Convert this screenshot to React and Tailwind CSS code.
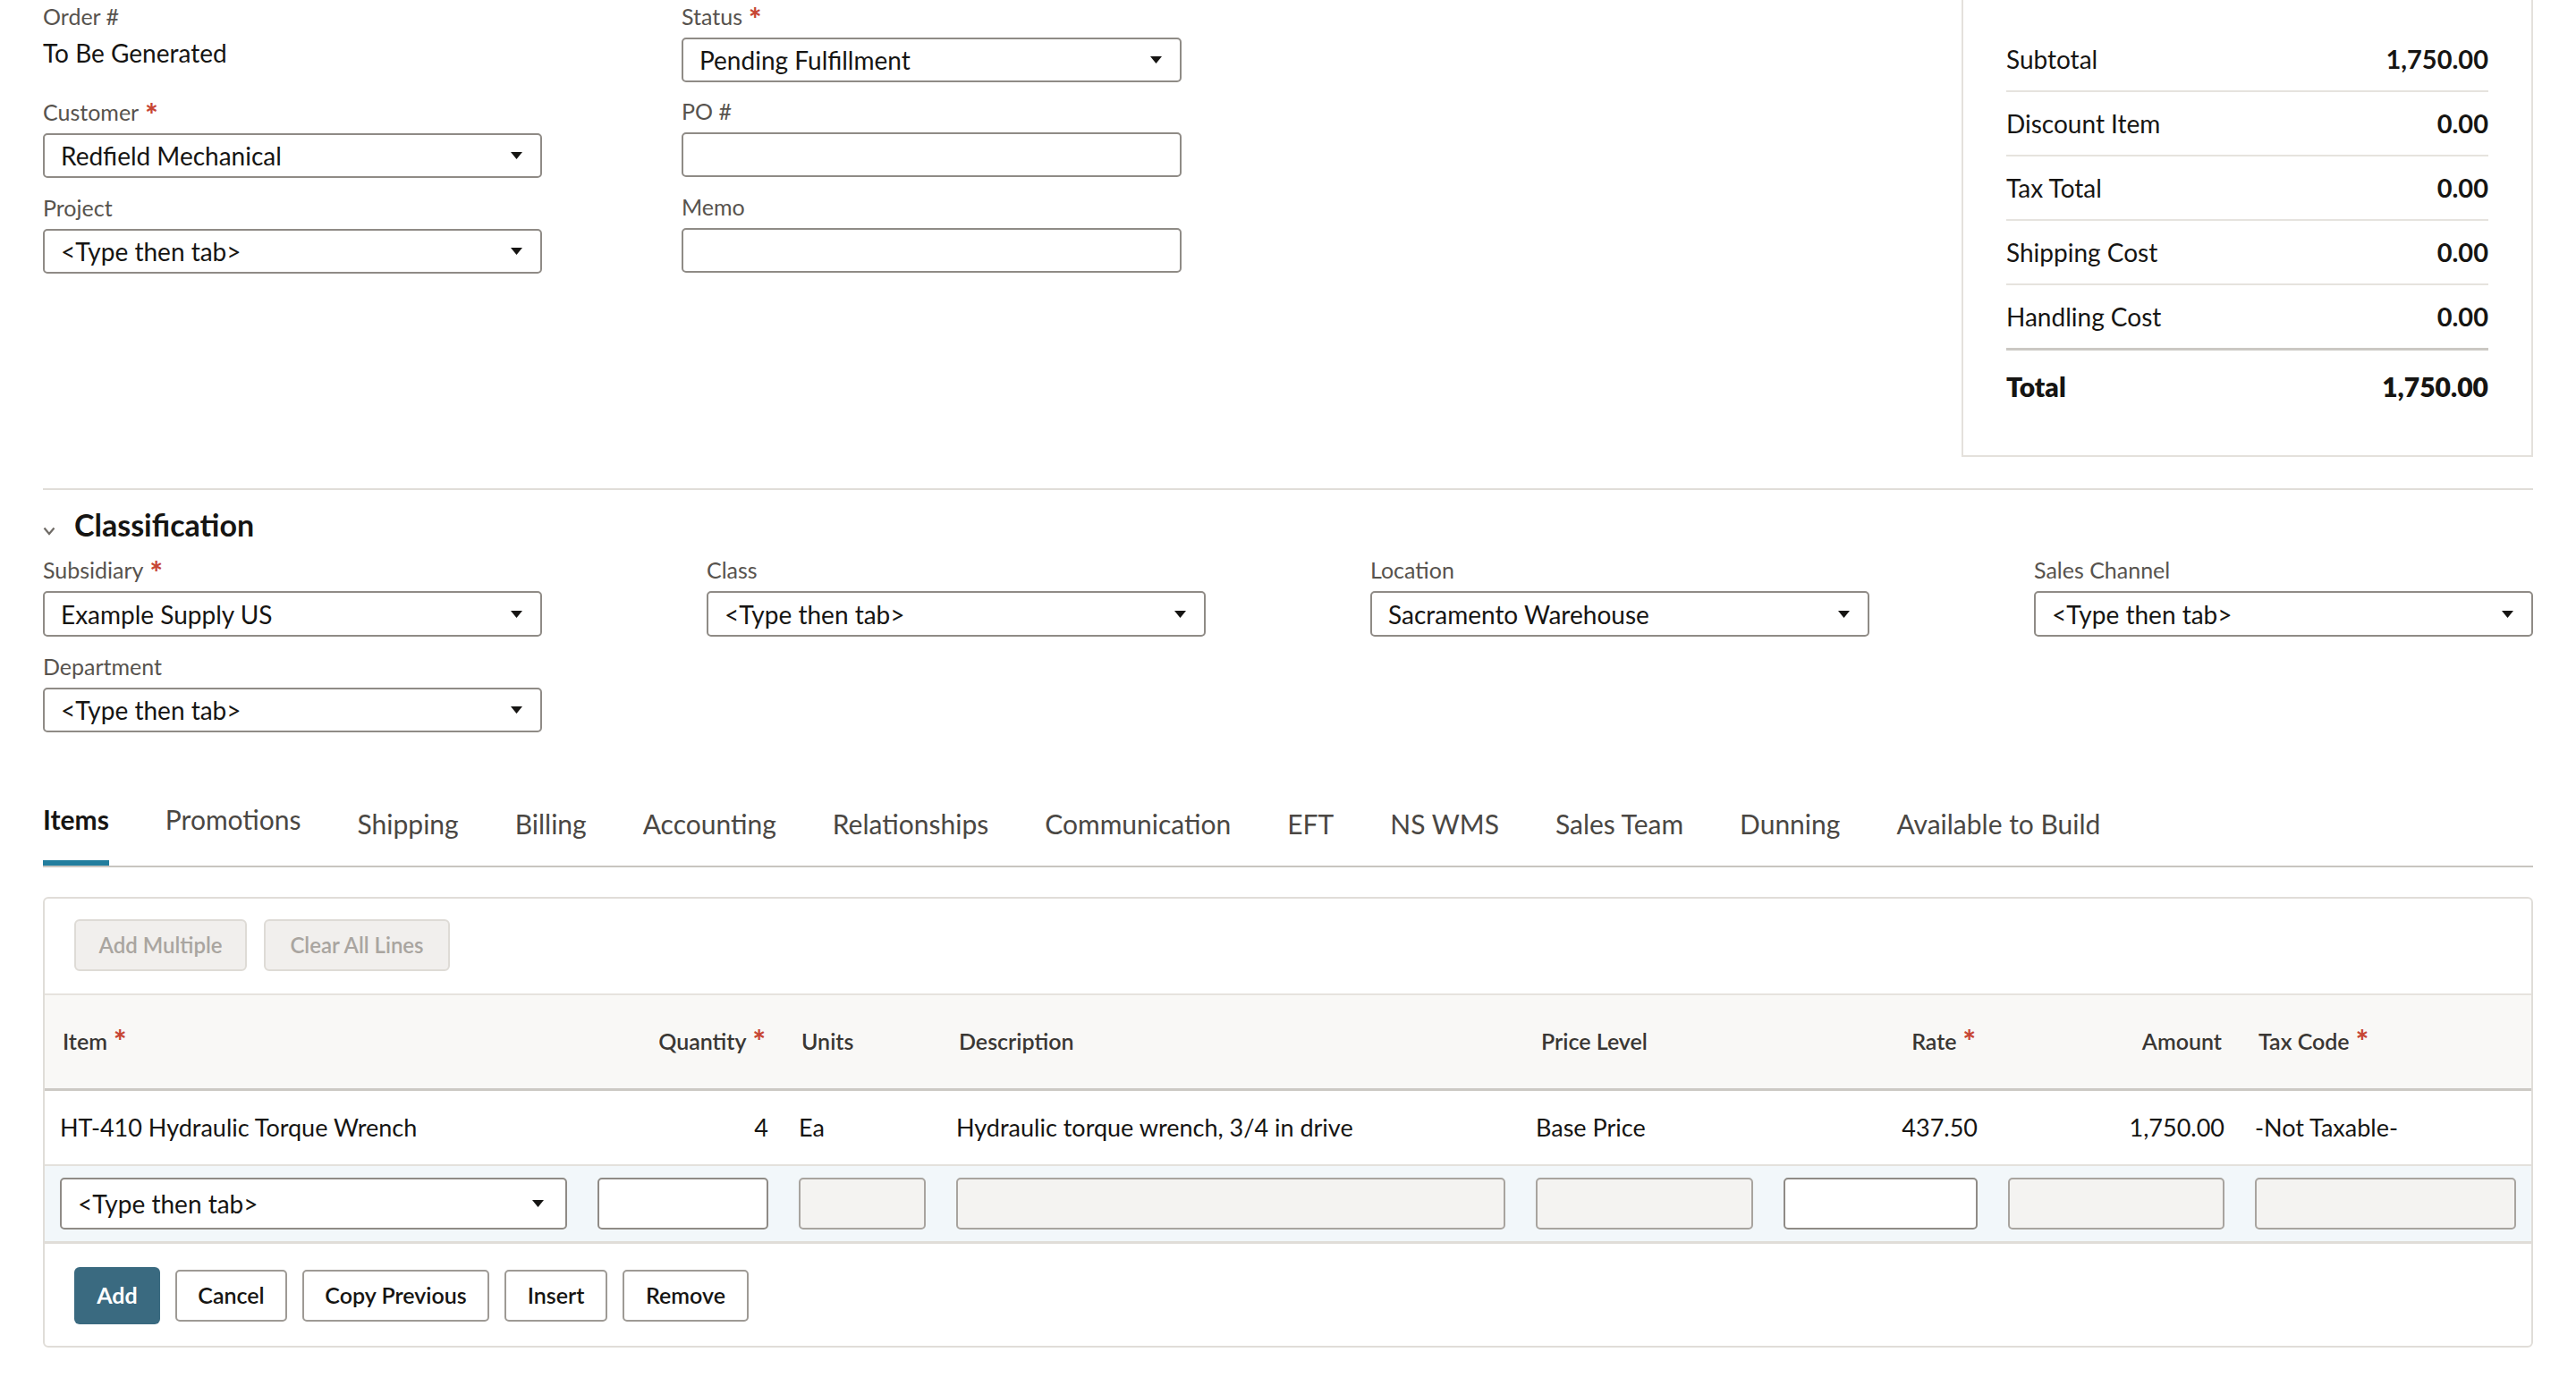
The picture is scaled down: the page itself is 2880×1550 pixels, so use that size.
const INK = "text-[#161513]";

function Caret() {
  return (
    <svg width="13" height="8" viewBox="0 0 13 8" className="shrink-0">
      <path d="M0 0h13L6.5 8z" fill="#161513" />
    </svg>
  );
}

function Req() {
  return (
    <span className="relative top-[1px] ml-[7px] align-top text-[34px] font-black leading-none text-[#c74634]">
      *
    </span>
  );
}

function Label({ children, required }) {
  return (
    <div className="h-[30px] whitespace-nowrap text-[25px] leading-[30px] text-[#57534e]">
      {children}
      {required && <Req />}
    </div>
  );
}

function Select({ value, className = "" }) {
  return (
    <div
      className={`flex items-center justify-between rounded-[5px] border-2 border-[#8f8b86] bg-white pl-[18px] pr-[20px] text-[28px] ${INK} ${className}`}
    >
      <span className="whitespace-nowrap">{value}</span>
      <Caret />
    </div>
  );
}

function Box({ className = "" }) {
  return <div className={`rounded-[5px] border-2 border-[#8f8b86] bg-white ${className}`} />;
}

function Field({ label, required, children }) {
  return (
    <div className="flex flex-col">
      <Label required={required}>{label}</Label>
      <div className="mt-[9px]">{children}</div>
    </div>
  );
}

const SUMMARY = [
  ["Subtotal", "1,750.00"],
  ["Discount Item", "0.00"],
  ["Tax Total", "0.00"],
  ["Shipping Cost", "0.00"],
  ["Handling Cost", "0.00"],
];

const TABS = [
  "Items",
  "Promotions",
  "Shipping",
  "Billing",
  "Accounting",
  "Relationships",
  "Communication",
  "EFT",
  "NS WMS",
  "Sales Team",
  "Dunning",
  "Available to Build",
];

const COLS =
  "grid grid-cols-[567px_191px_142px_614px_243px_217px_242px_292px] gap-x-[34px] px-[17px]";

export default function App() {
  return (
    <div className={`min-h-screen bg-white font-['Lato','Liberation_Sans',sans-serif] ${INK}`}>
      {/* header fields + summary */}
      <div className="flex px-[48px]">
        <div className="grid grid-cols-[558px_559px] gap-x-[156px] pt-[3px]">
          <div className="flex flex-col">
            <Label>Order #</Label>
            <div className="mt-[8px] h-[36px] text-[28px] leading-[36px]">To Be Generated</div>
            <div className="mt-[33px]">
              <Field label="Customer" required>
                <Select value="Redfield Mechanical" className="h-[50px]" />
              </Field>
            </div>
            <div className="mt-[18px]">
              <Field label="Project">
                <Select value="<Type then tab>" className="h-[50px]" />
              </Field>
            </div>
          </div>
          <div className="flex flex-col">
            <Field label="Status" required>
              <Select value="Pending Fulfillment" className="h-[50px]" />
            </Field>
            <div className="mt-[17px]">
              <Field label="PO #">
                <Box className="h-[50px]" />
              </Field>
            </div>
            <div className="mt-[18px]">
              <Field label="Memo">
                <Box className="h-[50px]" />
              </Field>
            </div>
          </div>
        </div>

        <div className="ml-auto w-[639px] border-x-2 border-b-2 border-[#e4e1dc] px-[48px] pt-[31px] pb-[37px] text-[28px]">
          {SUMMARY.map(([k, v], i) => (
            <div
              key={k}
              className={`flex items-center justify-between ${
                i === 4
                  ? "h-[73px] border-b-[3px] border-[#cbc8c3]"
                  : "h-[72px] border-b-2 border-[#e6e3de]"
              }`}
            >
              <span>{k}</span>
              <span className="text-[29px] font-bold">{v}</span>
            </div>
          ))}
          <div className="flex h-[80px] items-center justify-between text-[30px] font-extrabold">
            <span>Total</span>
            <span>1,750.00</span>
          </div>
        </div>
      </div>

      <div className="mx-[48px] mt-[35px] h-[2px] bg-[#e0ddd8]" />

      {/* classification */}
      <div className="mx-[48px] mt-[18px] flex h-[40px] items-center">
        <svg width="14" height="10" viewBox="0 0 14 10" className="mt-[16px] shrink-0">
          <path d="M1.5 1.5 7 8l5.5-6.5" fill="none" stroke="#6f6b66" strokeWidth="2.2" />
        </svg>
        <h2 className="ml-[21px] text-[34px] font-bold">Classification</h2>
      </div>

      <div className="mt-[16px] grid grid-cols-4 gap-x-[184px] gap-y-[18px] px-[48px]">
        <Field label="Subsidiary" required>
          <Select value="Example Supply US" className="h-[51px]" />
        </Field>
        <Field label="Class">
          <Select value="<Type then tab>" className="h-[51px]" />
        </Field>
        <Field label="Location">
          <Select value="Sacramento Warehouse" className="h-[51px]" />
        </Field>
        <Field label="Sales Channel">
          <Select value="<Type then tab>" className="h-[51px]" />
        </Field>
        <Field label="Department">
          <Select value="<Type then tab>" className="h-[50px]" />
        </Field>
      </div>

      {/* tabs */}
      <div className="mx-[48px] mt-[77px] flex gap-[63px] border-b-2 border-[#c8c5c0]">
        {TABS.map((t, i) => (
          <div key={t} className="flex h-[72px] flex-col">
            <span
              className={`h-[40px] whitespace-nowrap text-[30px] leading-[40px] ${
                i === 0 ? "font-bold text-[#161513]" : "text-[#4a4743]"
              } ${i >= 2 ? "mt-[5px]" : ""}`}
            >
              {t}
            </span>
            <span className={`mt-auto h-[6px] ${i === 0 ? "bg-[#227e9e]" : ""}`} />
          </div>
        ))}
      </div>

      {/* items panel */}
      <div className="mx-[48px] mt-[33px] rounded-[6px] border-2 border-[#e0ddd8]">
        <div className="flex gap-[19px] pl-[33px] pt-[23px] pb-[25px]">
          {[
            ["Add Multiple", "w-[193px]"],
            ["Clear All Lines", "w-[208px]"],
          ].map(([t, w]) => (
            <button
              key={t}
              className={`h-[58px] ${w} rounded-[6px] border-2 border-[#dedbd6] bg-[#f1efed] text-[24px] font-semibold text-[#a9a5a0]`}
            >
              {t}
            </button>
          ))}
        </div>

        <div
          className={`${COLS} h-[109px] items-center border-t-2 border-b-[3px] border-t-[#e6e3de] border-b-[#ccc9c4] bg-[#f9f8f6] text-[25px] font-semibold text-[#3a3734]`}
        >
          <span className="pl-[3px]">
            Item
            <Req />
          </span>
          <span className="pr-[3px] text-right">
            Quantity
            <Req />
          </span>
          <span className="pl-[3px]">Units</span>
          <span className="pl-[3px]">Description</span>
          <span className="pl-[6px]">Price Level</span>
          <span className="pr-[2px] text-right">
            Rate
            <Req />
          </span>
          <span className="pr-[3px] text-right">Amount</span>
          <span className="pl-[4px]">
            Tax Code
            <Req />
          </span>
        </div>

        <div className={`${COLS} h-[84px] items-center border-b-2 border-[#e4e1dc] text-[27px]`}>
          <span className="whitespace-nowrap">HT-410 Hydraulic Torque Wrench</span>
          <span className="text-right">4</span>
          <span>Ea</span>
          <span className="whitespace-nowrap">Hydraulic torque wrench, 3/4 in drive</span>
          <span>Base Price</span>
          <span className="text-right">437.50</span>
          <span className="text-right">1,750.00</span>
          <span>-Not Taxable-</span>
        </div>

        <div className={`${COLS} border-b-[3px] border-[#e0ddd8] bg-[#f2f7fa] py-[13px]`}>
          <Select value="<Type then tab>" className="h-[58px] pr-[24px]" />
          <Box className="h-[58px]" />
          <Box className="h-[58px] !border-[#a8a49f] !bg-[#f4f3f1]" />
          <Box className="h-[58px] !border-[#a8a49f] !bg-[#f4f3f1]" />
          <Box className="h-[58px] !border-[#a8a49f] !bg-[#f4f3f1]" />
          <Box className="h-[58px]" />
          <Box className="h-[58px] !border-[#a8a49f] !bg-[#f4f3f1]" />
          <Box className="h-[58px] !border-[#a8a49f] !bg-[#f4f3f1]" />
        </div>

        <div className="flex items-center gap-[17px] pl-[33px] pt-[26px] pb-[24px]">
          <button className="h-[64px] w-[96px] rounded-[6px] bg-[#3a6a80] text-[25px] font-bold text-white">
            Add
          </button>
          {[
            ["Cancel", "w-[125px]"],
            ["Copy Previous", "w-[209px]"],
            ["Insert", "w-[115px]"],
            ["Remove", "w-[141px]"],
          ].map(([t, w]) => (
            <button
              key={t}
              className={`h-[58px] ${w} rounded-[5px] border-2 border-[#9e9a95] bg-white text-[25px] font-semibold text-[#161513]`}
            >
              {t}
            </button>
          ))}
        </div>
      </div>
    </div>
  );
}
